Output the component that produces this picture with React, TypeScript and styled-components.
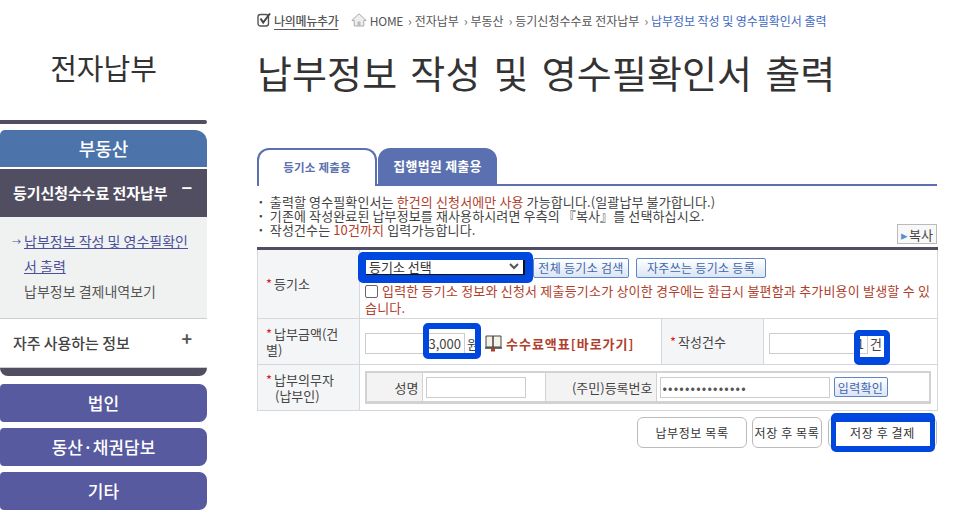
import * as React from 'react'
import styled, { createGlobalStyle } from 'styled-components'

const FONT = `"Noto Sans CJK KR", "Noto Sans", sans-serif`
const DARK = '#504e60'
const BLUE_MARK = '#0047e0'
const RED = '#b0402c'

const GlobalStyle = createGlobalStyle`
    html, body {
        margin: 0;
        padding: 0;
        background: #fff;
        overflow: hidden;
    }
    body {
        font-family: ${FONT};
        font-size: 13px;
        color: #444;
    }
    * {
        box-sizing: border-box;
    }
`

const Page = styled.div`
    display: flex;
    align-items: flex-start;
    width: 971px;
    height: 523px;
`

/* sidebar */
const Sidebar = styled.aside`
    width: 207px;
    flex: none;
    margin-right: 50px;
`

const SideTitle = styled.h2`
    margin: 0;
    height: 120px;
    padding-top: 47px;
    text-align: center;
    font-size: 29px;
    line-height: 40px;
    font-weight: 400;
    color: #333;
`

const TopBar = styled.div`
    height: 4px;
    background: ${DARK};
    border-radius: 0 2px 2px 0;
`

const MainMenu = styled.div`
    margin: 6px 0 8px;
`

const MenuHead = styled.div`
    height: 38px;
    line-height: 37px;
    text-align: center;
    background: #4c74ab;
    color: #fff;
    font-size: 18px;
    font-weight: 500;
    border-radius: 5px 12px 0 0;
    border-bottom: 1px solid #fff;
`

const SubHead = styled.div`
    height: 49px;
    display: flex;
    justify-content: space-between;
    align-items: center;
    padding: 0 15px 2px 13px;
    background: ${DARK};
    border-top: 1px solid #fff;
    color: #fff;
    font-size: 15px;
    font-weight: 700;
    letter-spacing: -0.05px;
`

const Toggle = styled.span<{ $dark?: boolean }>`
    font-size: 18px;
    line-height: 18px;
    font-weight: 700;
    margin-top: ${({ $dark }) => ($dark ? '-8px' : '-10px')};
    color: ${({ $dark }) => ($dark ? '#555' : '#fff')};
`

const SubList = styled.div`
    height: 102px;
    padding: 12px 15px 0 12px;
    background: #f0f2f1;
    border-bottom: 1px solid #ccc;
    font-size: 14px;
    line-height: 25px;
`

const SubLink = styled.a`
    display: block;
    padding-left: 12px;
    position: relative;
    color: #555;
`

const ActiveLink = styled(SubLink)`
    color: #4b4f9c;
    text-decoration: underline;
    &::before {
        content: '→';
        position: absolute;
        left: 0;
        top: 0;
        font-size: 9px;
    }
`

const OtherHead = styled(SubHead)`
    background: #fff;
    border-top: 0;
    border-bottom: 1px solid #ccc;
    color: #444;
    font-weight: 500;
`

const MenuFoot = styled.div`
    height: 8px;
    background: ${DARK};
    border-radius: 0 0 8px 8px;
`

const PurpleItem = styled.div`
    height: 38px;
    margin-bottom: 6px;
    line-height: 37px;
    text-align: center;
    background: #575a9e;
    color: #fff;
    font-size: 17px;
    font-weight: 500;
    border-radius: 4px 8px 8px 4px;
`

/* main */
const Main = styled.main`
    width: 680px;
    flex: none;
`

const Crumbs = styled.div`
    height: 40px;
    display: flex;
    align-items: center;
    font-size: 12px;
    color: #555;
    letter-spacing: -0.3px;
`

const MyMenu = styled.span`
    display: inline-flex;
    align-items: center;
    gap: 2px;
    margin-right: 13px;
    font-size: 12px;
    font-weight: 500;
    text-decoration: underline;
    text-underline-offset: 3px;
`

const Crumb = styled.span<{ $current?: boolean }>`
    color: ${({ $current }) => ($current ? '#4169c0' : '#555')};
    letter-spacing: ${({ $current }) => ($current ? '-0.05px' : '0')};
    &::before {
        content: '›';
        margin: 0 3px 0 5px;
        color: #666;
    }
`

const PageTitle = styled.h1`
    margin: 9px 0 0;
    height: 99px;
    font-size: 38px;
    line-height: 46px;
    font-weight: 400;
    color: #333;
    letter-spacing: 0.1px;
    word-spacing: 4.5px;
`

const Tabs = styled.div`
    display: flex;
    gap: 1px;
    height: 38px;
    border-bottom: 2px solid #5a70b0;
`

const Tab = styled.div<{ $active?: boolean }>`
    width: ${({ $active }) => ($active ? '120px' : '119px')};
    height: ${({ $active }) => ($active ? '38px' : '36px')};
    display: flex;
    align-items: center;
    justify-content: center;
    padding-bottom: 2px;
    border: 2px solid #5a70b0;
    border-bottom: ${({ $active }) => ($active ? '0' : '2px solid #5a70b0')};
    border-radius: 12px 12px 0 0;
    background: ${({ $active }) => ($active ? '#fff' : '#5a70b0')};
    color: ${({ $active }) => ($active ? '#5a70b0' : '#fff')};
    font-size: ${({ $active }) => ($active ? '11.5px' : '13px')};
    font-weight: 700;
    letter-spacing: 0.2px;
`

const NoticeRow = styled.div`
    display: flex;
    justify-content: space-between;
    align-items: flex-start;
    height: 60px;
    padding-top: 9px;
`

const Notes = styled.ul`
    margin: 0;
    padding: 0;
    list-style: none;
    font-size: 13px;
    line-height: 14px;
    color: #444;
    letter-spacing: 0.12px;
`

const Note = styled.li`
    white-space: nowrap;
    &::before {
        content: '·';
        font-weight: 700;
        margin-right: 5px;
    }
`

const Red = styled.span`
    color: ${RED};
`

const CopyButton = styled.button`
    width: 40px;
    height: 20px;
    padding: 0;
    margin-top: 29px;
    border: 1px solid #bbb;
    background: #f8f8f8;
    font-family: ${FONT};
    font-size: 13px;
    line-height: 17px;
    color: #444;
    &::before {
        content: '▸';
        color: #5b8fd0;
        margin-right: 1px;
    }
`

const FormTable = styled.table`
    width: 680px;
    margin-top: 1px;
    border-collapse: collapse;
    table-layout: fixed;
    border-top: 3px solid ${DARK};
    border-bottom: 1px solid ${DARK};
    font-size: 13px;
`

const Label = styled.th<{ $h: number }>`
    height: ${({ $h }) => $h}px;
    padding: 0 0 0 8px;
    background: #f4f5f7;
    border: 1px solid #d6d7db;
    border-top: 0;
    font-weight: 400;
    text-align: left;
    line-height: 16px;
    color: #444;
`

const Cell = styled.td`
    padding: 0 5px;
    border: 1px solid #d6d7db;
    border-top: 0;
    vertical-align: middle;
`

const Star = styled.span`
    color: #e02020;
    margin-right: 2px;
`

const Indent = styled.span`
    display: block;
    padding-left: 9px;
`

const InlineRow = styled.div`
    display: flex;
    align-items: center;
`

const SelectRow = styled(InlineRow)`
    margin-top: 5px;
`

const AmountRow = styled(InlineRow)`
    margin-top: 3px;
`

const Marked = styled.span`
    position: relative;
    display: inline-flex;
    align-items: center;
`

/* hand drawn blue highlight that sits over the form */
const Marker = styled.span<{ $t: number; $r: number; $b: number; $l: number; $w: string }>`
    position: absolute;
    top: ${({ $t }) => $t}px;
    right: ${({ $r }) => $r}px;
    bottom: ${({ $b }) => $b}px;
    left: ${({ $l }) => $l}px;
    border-style: solid;
    border-color: ${BLUE_MARK};
    border-width: ${({ $w }) => $w};
    border-radius: 5px;
    pointer-events: none;
`

const FakeSelect = styled.div`
    width: 160px;
    height: 17px;
    display: flex;
    align-items: center;
    justify-content: space-between;
    padding: 0 4px 0 4px;
    border-right: 2px solid #111;
    border-bottom: 2px solid #111;
    background: #fff;
    font-size: 13px;
    color: #333;
`

const BlueButton = styled.button<{ $w: number; $ml: number }>`
    width: ${({ $w }) => $w}px;
    height: 20px;
    margin-left: ${({ $ml }) => $ml}px;
    padding: 0;
    border: 1px solid #5f86c4;
    border-radius: 2px;
    background: linear-gradient(#fff, #dbe5f4);
    font-family: ${FONT};
    font-size: 12px;
    line-height: 17px;
    letter-spacing: 0.3px;
    color: #3f66ae;
`

const Warning = styled.div`
    margin-top: 4px;
    font-size: 13px;
    line-height: 17px;
    color: ${RED};
    letter-spacing: 0.2px;
`

const Check = styled.span`
    display: inline-block;
    width: 13px;
    height: 13px;
    margin-right: 4px;
    vertical-align: -2px;
    border: 1px solid #666;
    border-radius: 2px;
    background: #fff;
`

const TextBox = styled.div<{ $w: number; $h?: number }>`
    width: ${({ $w }) => $w}px;
    height: ${({ $h }) => $h ?? 21}px;
    border: 1px solid #ccc;
    background: #fff;
    font-size: 13px;
    line-height: 19px;
    color: #444;
    white-space: nowrap;
    overflow: hidden;
`

const AmountBox = styled(TextBox)`
    text-align: right;
    padding-right: 3px;
`

const Unit = styled.span`
    margin-left: 2px;
    font-size: 13px;
    color: #444;
`

const FeeLink = styled.a`
    margin-left: 6px;
    display: inline-flex;
    align-items: center;
    gap: 4px;
    font-weight: 700;
    font-size: 13px;
    letter-spacing: 1px;
    color: ${RED};
`

const InnerTable = styled.table`
    width: 564px;
    border-collapse: collapse;
    table-layout: fixed;
    border: 2px solid #d2d2d2;
    border-bottom-width: 3px;
    font-size: 13px;
`

const InnerLabel = styled.th`
    height: 31px;
    padding: 0 3px 0 0;
    background: #f3f3f3;
    border-right: 1px solid #d2d2d2;
    border-left: 1px solid #d2d2d2;
    font-weight: 400;
    text-align: right;
    color: #444;
`

const InnerCell = styled.td`
    padding: 0 0 0 3px;
`

const Dots = styled(TextBox)`
    padding-left: 2px;
    font-size: 13px;
    letter-spacing: 1.2px;
    line-height: 20px;
    color: #555;
`

const Actions = styled.div`
    display: flex;
    justify-content: flex-end;
    margin-top: 6px;
`

const ActionButton = styled.button<{ $w: number; $ml?: number }>`
    position: relative;
    width: ${({ $w }) => $w}px;
    height: 31px;
    margin-left: ${({ $ml }) => $ml ?? 0}px;
    padding: 0;
    border: 1px solid #bbb;
    border-radius: 6px;
    background: #fff;
    font-family: ${FONT};
    font-size: 12px;
    letter-spacing: 0.6px;
    color: #333;
`

const CheckIcon = () => (
    <svg width="15" height="16" viewBox="0 0 15 16" fill="none">
        <rect x="1" y="2.5" width="10.5" height="11.5" rx="2.5" stroke="#555" strokeWidth="1.4" />
        <path d="M3.5 6.5 6.2 10.5 13 1.5" stroke="#444" strokeWidth="2" />
    </svg>
)

const HomeIcon = () => (
    <svg width="16" height="14" viewBox="0 0 16 14">
        <path d="M8 .8.8 7.4h2.4V13h9.6V7.4h2.4z" fill="#eee" stroke="#aaa" />
        <rect x="6.5" y="8.5" width="3" height="4.5" fill="#bbb" />
    </svg>
)

const BookIcon = () => (
    <svg width="17" height="18" viewBox="0 0 17 18">
        <path d="M1 2h7v11H1zM8 2h8v11H8z" fill="#f5f1e6" stroke="#444" />
        <path d="M0 14h17" stroke="#333" strokeWidth="1.4" />
        <rect x="6" y="14" width="4" height="3.5" fill="#b0402c" />
    </svg>
)

const ChevronIcon = () => (
    <svg width="10" height="7" viewBox="0 0 10 7" fill="none">
        <path d="M1 1l4 4 4-4" stroke="#555" strokeWidth="2" />
    </svg>
)

const PURPLE_ITEMS = ['법인', '동산·채권담보', '기타']
const CRUMBS = ['전자납부', '부동산', '등기신청수수료 전자납부']

export default function App() {
    return (
        <Page>
            <GlobalStyle />
            <Sidebar>
                <SideTitle>전자납부</SideTitle>
                <TopBar />
                <MainMenu>
                    <MenuHead>부동산</MenuHead>
                    <SubHead>
                        등기신청수수료 전자납부
                        <Toggle>−</Toggle>
                    </SubHead>
                    <SubList>
                        <ActiveLink>납부정보 작성 및 영수필확인서 출력</ActiveLink>
                        <SubLink>납부정보 결제내역보기</SubLink>
                    </SubList>
                    <OtherHead>
                        자주 사용하는 정보
                        <Toggle $dark>+</Toggle>
                    </OtherHead>
                    <MenuFoot />
                </MainMenu>
                {PURPLE_ITEMS.map(item => (
                    <PurpleItem key={item}>{item}</PurpleItem>
                ))}
            </Sidebar>
            <Main>
                <Crumbs>
                    <MyMenu>
                        <CheckIcon />
                        나의메뉴추가
                    </MyMenu>
                    <HomeIcon />
                    &nbsp;HOME
                    {CRUMBS.map(c => (
                        <Crumb key={c}>{c}</Crumb>
                    ))}
                    <Crumb $current>납부정보 작성 및 영수필확인서 출력</Crumb>
                </Crumbs>
                <PageTitle>납부정보 작성 및 영수필확인서 출력</PageTitle>
                <Tabs>
                    <Tab $active>등기소 제출용</Tab>
                    <Tab>집행법원 제출용</Tab>
                </Tabs>
                <NoticeRow>
                    <Notes>
                        <Note>
                            출력할 영수필확인서는 <Red>한건의 신청서에만 사용</Red> 가능합니다.(일괄납부 불가합니다.)
                        </Note>
                        <Note>기존에 작성완료된 납부정보를 재사용하시려면 우측의 『복사』를 선택하십시오.</Note>
                        <Note>
                            작성건수는 <Red>10건까지</Red> 입력가능합니다.
                        </Note>
                    </Notes>
                    <CopyButton>복사</CopyButton>
                </NoticeRow>
                <FormTable>
                    <colgroup>
                        <col width="102" />
                        <col width="302" />
                        <col width="102" />
                        <col width="174" />
                    </colgroup>
                    <tbody>
                        <tr>
                            <Label $h={70}>
                                <Star>*</Star>등기소
                            </Label>
                            <Cell colSpan={3}>
                                <SelectRow>
                                    <Marked>
                                        <FakeSelect>
                                            등기소 선택
                                            <ChevronIcon />
                                        </FakeSelect>
                                        <Marker $t={-7} $r={-8} $b={-7} $l={-7} $w="8px" />
                                    </Marked>
                                    <BlueButton $w={96} $ml={8}>
                                        전체 등기소 검색
                                    </BlueButton>
                                    <BlueButton $w={130} $ml={7}>
                                        자주쓰는 등기소 등록
                                    </BlueButton>
                                </SelectRow>
                                <Warning>
                                    <Check />
                                    입력한 등기소 정보와 신청서 제출등기소가 상이한 경우에는 환급시 불편함과 추가비용이 발생할 수 있습니다.
                                </Warning>
                            </Cell>
                        </tr>
                        <tr>
                            <Label $h={46}>
                                <Star>*</Star>납부금액(건
                                <br />
                                별)
                            </Label>
                            <Cell>
                                <AmountRow>
                                    <Marked>
                                        <AmountBox $w={100}>3,000</AmountBox>
                                        <Unit>원</Unit>
                                        <Marker $t={-10} $r={-2} $b={-5} $l={58} $w="6px" />
                                    </Marked>
                                    <FeeLink>
                                        <BookIcon />
                                        수수료액표[바로가기]
                                    </FeeLink>
                                </AmountRow>
                            </Cell>
                            <Label $h={46}>
                                <Star>*</Star>작성건수
                            </Label>
                            <Cell>
                                <AmountRow>
                                    <Marked>
                                        <AmountBox $w={99}>1</AmountBox>
                                        <Unit>건</Unit>
                                        <Marker $t={-3} $r={-8} $b={-11} $l={85} $w="6px 6px 8px 6px" />
                                    </Marked>
                                </AmountRow>
                            </Cell>
                        </tr>
                        <tr>
                            <Label $h={46}>
                                <Star>*</Star>납부의무자
                                <Indent>(납부인)</Indent>
                            </Label>
                            <Cell colSpan={3}>
                                <InnerTable>
                                    <colgroup>
                                        <col width="56" />
                                        <col width="123" />
                                        <col width="111" />
                                        <col width="274" />
                                    </colgroup>
                                    <tbody>
                                        <tr>
                                            <InnerLabel>성명</InnerLabel>
                                            <InnerCell>
                                                <TextBox $w={100} />
                                            </InnerCell>
                                            <InnerLabel>(주민)등록번호</InnerLabel>
                                            <InnerCell>
                                                <InlineRow>
                                                    <Dots $w={170}>•••••••••••••••</Dots>
                                                    <BlueButton $w={54} $ml={4}>
                                                        입력확인
                                                    </BlueButton>
                                                </InlineRow>
                                            </InnerCell>
                                        </tr>
                                    </tbody>
                                </InnerTable>
                            </Cell>
                        </tr>
                    </tbody>
                </FormTable>
                <Actions>
                    <ActionButton $w={110}>납부정보 목록</ActionButton>
                    <ActionButton $w={70} $ml={5}>
                        저장 후 목록
                    </ActionButton>
                    <ActionButton $w={109} $ml={6}>
                        저장 후 결제
                        <Marker $t={-5} $r={1} $b={-5} $l={2} $w="9px 5px 6px 5px" />
                    </ActionButton>
                </Actions>
            </Main>
        </Page>
    )
}
